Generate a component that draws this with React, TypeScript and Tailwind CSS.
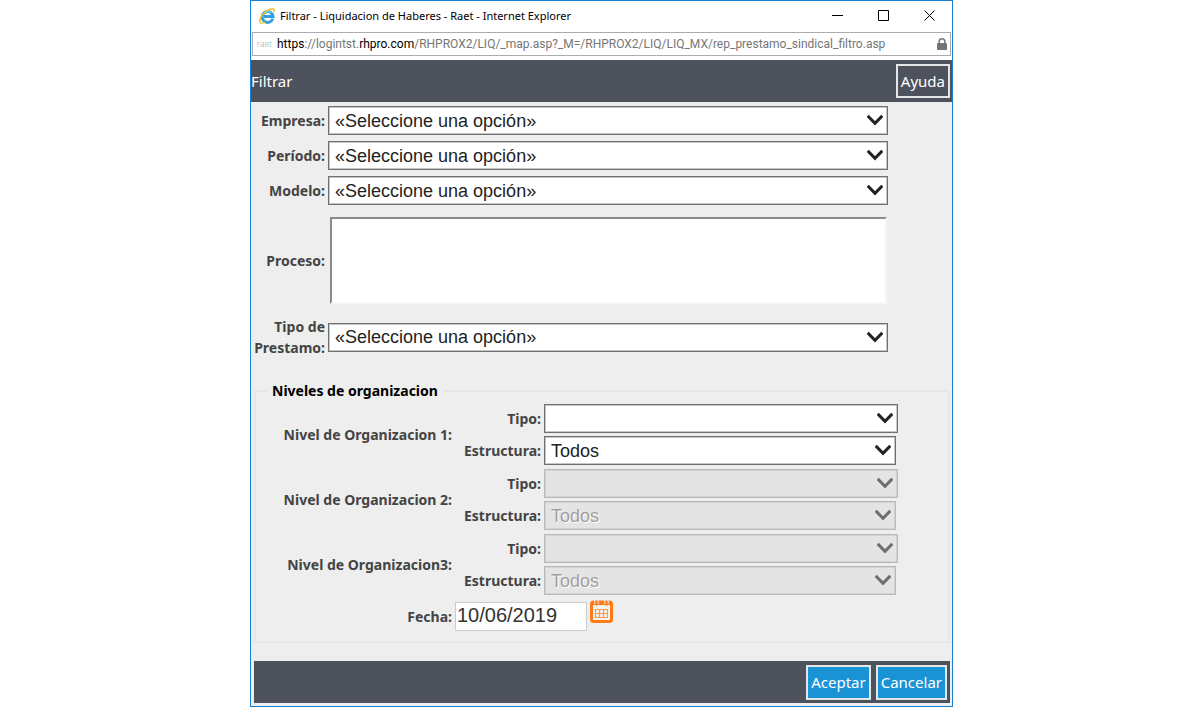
import type { ReactNode } from 'react';

const placeholder = '«Seleccione una opción»';

const Chevron = () => (
  <svg
    viewBox="0 0 16 12"
    className="pointer-events-none absolute top-2 right-[5px] h-3 w-4"
    fill="none"
    stroke="currentColor"
    strokeWidth="3"
  >
    <path d="M0.7 1.8 L8 9.3 L15.3 1.8" />
  </svg>
);

type SelectBoxProps = {
  id: string;
  option: string;
  disabled?: boolean;
};

const SelectBox = ({ id, option, disabled }: SelectBoxProps) => (
  <div
    className={`relative h-[29px] w-full ${
      disabled ? 'text-[#6d6d6d]' : 'text-[#222222]'
    }`}
  >
    <select
      id={id}
      disabled={disabled}
      className="block h-full w-full appearance-none border border-[#707070] bg-white pr-6 pl-1.5 font-['Liberation_Sans',Arial,sans-serif] text-lg leading-6 font-normal text-[#222222] shadow-[inset_0_0_0_1px_#c6c6c6] disabled:border-[#b8b8b8] disabled:bg-[#e4e4e4] disabled:text-[#a0a0a0] disabled:opacity-100 disabled:shadow-[inset_0_0_0_1px_#d4d4d4] disabled:[text-shadow:1px_1px_0_#ffffff]"
    >
      <option>{option}</option>
    </select>
    <Chevron />
  </div>
);

const FormRow = ({ id, label, children }: { id: string; label: string; children: ReactNode }) => (
  <div className="flex items-center gap-[3px]">
    <label htmlFor={id} className="w-[74px] shrink-0 text-right">
      {label}
    </label>
    <div className="min-w-0 flex-1">{children}</div>
  </div>
);

type LevelProps = {
  n: number;
  label: string;
  disabled?: boolean;
};

const Level = ({ n, label, disabled }: LevelProps) => (
  <div role="group" aria-label={label} className="flex items-center">
    <span className="w-[196px] shrink-0 text-right">{label}</span>
    <div className="flex min-w-0 flex-1 flex-col gap-[3px]">
      <div className="flex items-center gap-[3px]">
        <label htmlFor={`tipo${n}`} className="w-[89px] shrink-0 text-right">
          Tipo:
        </label>
        <SelectBox id={`tipo${n}`} option="" disabled={disabled} />
      </div>
      <div className="flex items-center gap-[3px] pr-0.5">
        <label htmlFor={`estructura${n}`} className="w-[89px] shrink-0 text-right">
          Estructura:
        </label>
        <SelectBox id={`estructura${n}`} option="Todos" disabled={disabled} />
      </div>
    </div>
  </div>
);

const ExplorerLogo = () => (
  <svg viewBox="0 0 16 16" className="h-4 w-4" fill="none">
    <path
      d="M13.8 10.6 A5.4 5.4 0 1 1 14 8.4 H5"
      stroke="#2f9fe0"
      strokeWidth="3"
    />
    <path d="M4.2 6.2 A5.4 5.4 0 0 1 12 4.6" stroke="#7fd0f5" strokeWidth="1.2" />
    <path
      d="M2 15 C-1.2 13.6 2.2 7 7.4 3.2 C11.4 0.2 15.8 -0.4 15.2 4"
      stroke="#efc02c"
      strokeWidth="1.5"
    />
    <path d="M1.8 15 C3.2 15.6 4.6 14.8 6 13.8" stroke="#efc02c" strokeWidth="1.3" />
  </svg>
);

const CalendarIcon = () => (
  <svg viewBox="0 0 23 23" className="h-[23px] w-[23px]" fill="none" stroke="#ff7b17">
    <rect x="1.5" y="2" width="20" height="19.5" rx="2" strokeWidth="3" fill="#f6f2ee" />
    <path d="M2 3.5 H21" strokeWidth="3" />
    <path d="M6.5 0 V4 M16.5 0 V4" stroke="#eeeeee" strokeWidth="4.4" />
    <path d="M6.5 0.5 V5.5 M16.5 0.5 V5.5" strokeWidth="2.4" />
    <g stroke="#ff9a4d" strokeWidth="1.2">
      <path d="M5 9.5 H18 M5 13.5 H18 M5 17.5 H18" />
      <path d="M5.5 9 V18 M9.5 9 V18 M13.5 9 V18 M17.5 9 V18" />
    </g>
  </svg>
);

const TitleBar = () => (
  <header className="flex h-[31px] items-center bg-white pb-0.5 pl-2 text-black">
    <ExplorerLogo />
    <h1 className="ml-[5px] flex-1 truncate text-[11px] leading-4">
      Filtrar - Liquidacion de Haberes - Raet - Internet Explorer
    </h1>
    <div className="flex">
      <button type="button" aria-label="Minimizar" className="flex h-7 w-[46px] items-center justify-center">
        <svg viewBox="0 0 11 11" className="h-[11px] w-[11px]" stroke="currentColor">
          <path d="M0 5.5 H11" />
        </svg>
      </button>
      <button type="button" aria-label="Maximizar" className="flex h-7 w-[46px] items-center justify-center">
        <svg viewBox="0 0 11 11" className="h-[11px] w-[11px]" fill="none" stroke="currentColor">
          <path d="M0.5 0.5 H10.5 V10.5 H0.5 Z" />
        </svg>
      </button>
      <button type="button" aria-label="Cerrar" className="flex h-7 w-[46px] items-center justify-center">
        <svg viewBox="0 0 11 11" className="h-[11px] w-[11px]" stroke="currentColor">
          <path d="M0.5 0.5 L10.5 10.5 M10.5 0.5 L0.5 10.5" />
        </svg>
      </button>
    </div>
  </header>
);

const AddressBar = () => (
  <div className="bg-white px-px pb-1">
    <div className="flex h-6 items-center border border-[#acacac] pr-[3px] pl-1 text-[#767676]">
      <span className="w-5 shrink-0 text-[8px] leading-3 text-[#d9a9a9]">
        ra<span className="text-[#a9cfc4]">et</span>
      </span>
      <p className="min-w-0 flex-1 truncate font-[Roboto,'Noto_Sans',sans-serif] text-xs">
        <span className="text-black">https</span>://logintst.
        <span className="text-black">rhpro.com</span>
        /RHPROX2/LIQ/_map.asp?_M=/RHPROX2/LIQ/LIQ_MX/rep_prestamo_sindical_filtro.asp
      </p>
      <svg viewBox="0 0 10 12" className="h-3 w-2.5 shrink-0" fill="#767676">
        <rect x="0" y="5" width="10" height="7" rx="1" />
        <path d="M2.2 6 V3.6 a2.8 2.8 0 0 1 5.6 0 V6" fill="none" stroke="#767676" strokeWidth="1.5" />
      </svg>
    </div>
  </div>
);

const App = () => {
  return (
    <div className="flex justify-center bg-white pl-1 font-['Noto_Sans','Open_Sans',sans-serif]">
      <main className="w-full max-w-[703px] border border-[#1a80d2] bg-[#eeeeee]">
        <TitleBar />
        <AddressBar />

        {/* Toolbar */}
        <div className="flex h-[42px] items-center justify-between bg-[#4e525d] pr-0.5 text-[15px] text-white">
          <h2>Filtrar</h2>
          <button
            type="button"
            className="h-[34px] border-2 border-[#e6e6e6] px-[3px]"
          >
            Ayuda
          </button>
        </div>

        <form className="text-sm leading-[21px] font-bold text-[#444444]">
          <div className="flex flex-col gap-1.5 pt-1 pr-16">
            <FormRow id="empresa" label="Empresa:">
              <SelectBox id="empresa" option={placeholder} />
            </FormRow>
            <FormRow id="periodo" label="Período:">
              <SelectBox id="periodo" option={placeholder} />
            </FormRow>
            <FormRow id="modelo" label="Modelo:">
              <SelectBox id="modelo" option={placeholder} />
            </FormRow>
            <div className="py-1.5">
              <FormRow id="proceso" label="Proceso:">
                <div className="pr-px pl-0.5">
                  <textarea
                    id="proceso"
                    className="block h-[87px] w-full resize-none border-2 border-t-[#8a8a8a] border-r-[#f6f6f6] border-b-[#f6f6f6] border-l-[#8a8a8a] bg-white"
                  />
                </div>
              </FormRow>
            </div>
            <FormRow id="prestamo" label="Tipo de Prestamo:">
              <SelectBox id="prestamo" option={placeholder} />
            </FormRow>
          </div>

          {/* Niveles */}
          <fieldset className="mt-[22px] mr-0.5 ml-[3px] border-2 border-[#e6e6e6] pb-2.5">
            <legend className="ml-[11px] px-[5px] text-black">Niveles de organizacion</legend>
            <div className="flex flex-col gap-1 pt-[3px] pr-[50px]">
              <Level n={1} label="Nivel de Organizacion 1:" />
              <Level n={2} label="Nivel de Organizacion 2:" disabled />
              <Level n={3} label="Nivel de Organizacion3:" disabled />
            </div>
            <div className="mt-[5px] flex items-start gap-[3px]">
              <label htmlFor="fecha" className="mt-1.5 w-[196px] shrink-0 text-right">
                Fecha:
              </label>
              <input
                id="fecha"
                type="text"
                defaultValue="10/06/2019"
                className="mt-0.5 h-[29px] w-[132px] border border-[#cccccc] bg-white px-px pb-0.5 font-['Liberation_Sans',Arial,sans-serif] text-xl font-normal text-[#333333]"
              />
              <button type="button" aria-label="Abrir calendario">
                <CalendarIcon />
              </button>
            </div>
          </fieldset>

          {/* Botones */}
          <div className="mt-[18px] mr-0.5 mb-[3px] ml-[3px] flex h-[42px] items-center justify-end gap-[5px] bg-[#4e525d] pr-[3px] text-[15px] text-white">
            <button
              type="submit"
              className="h-[35px] border-2 border-[#e6e6e6] bg-[#1a92d6] px-[3px] font-normal"
            >
              Aceptar
            </button>
            <button
              type="button"
              className="h-[35px] border-2 border-[#e6e6e6] bg-[#1a92d6] px-[3px] font-normal"
            >
              Cancelar
            </button>
          </div>
        </form>
      </main>
    </div>
  );
};

export default App;
